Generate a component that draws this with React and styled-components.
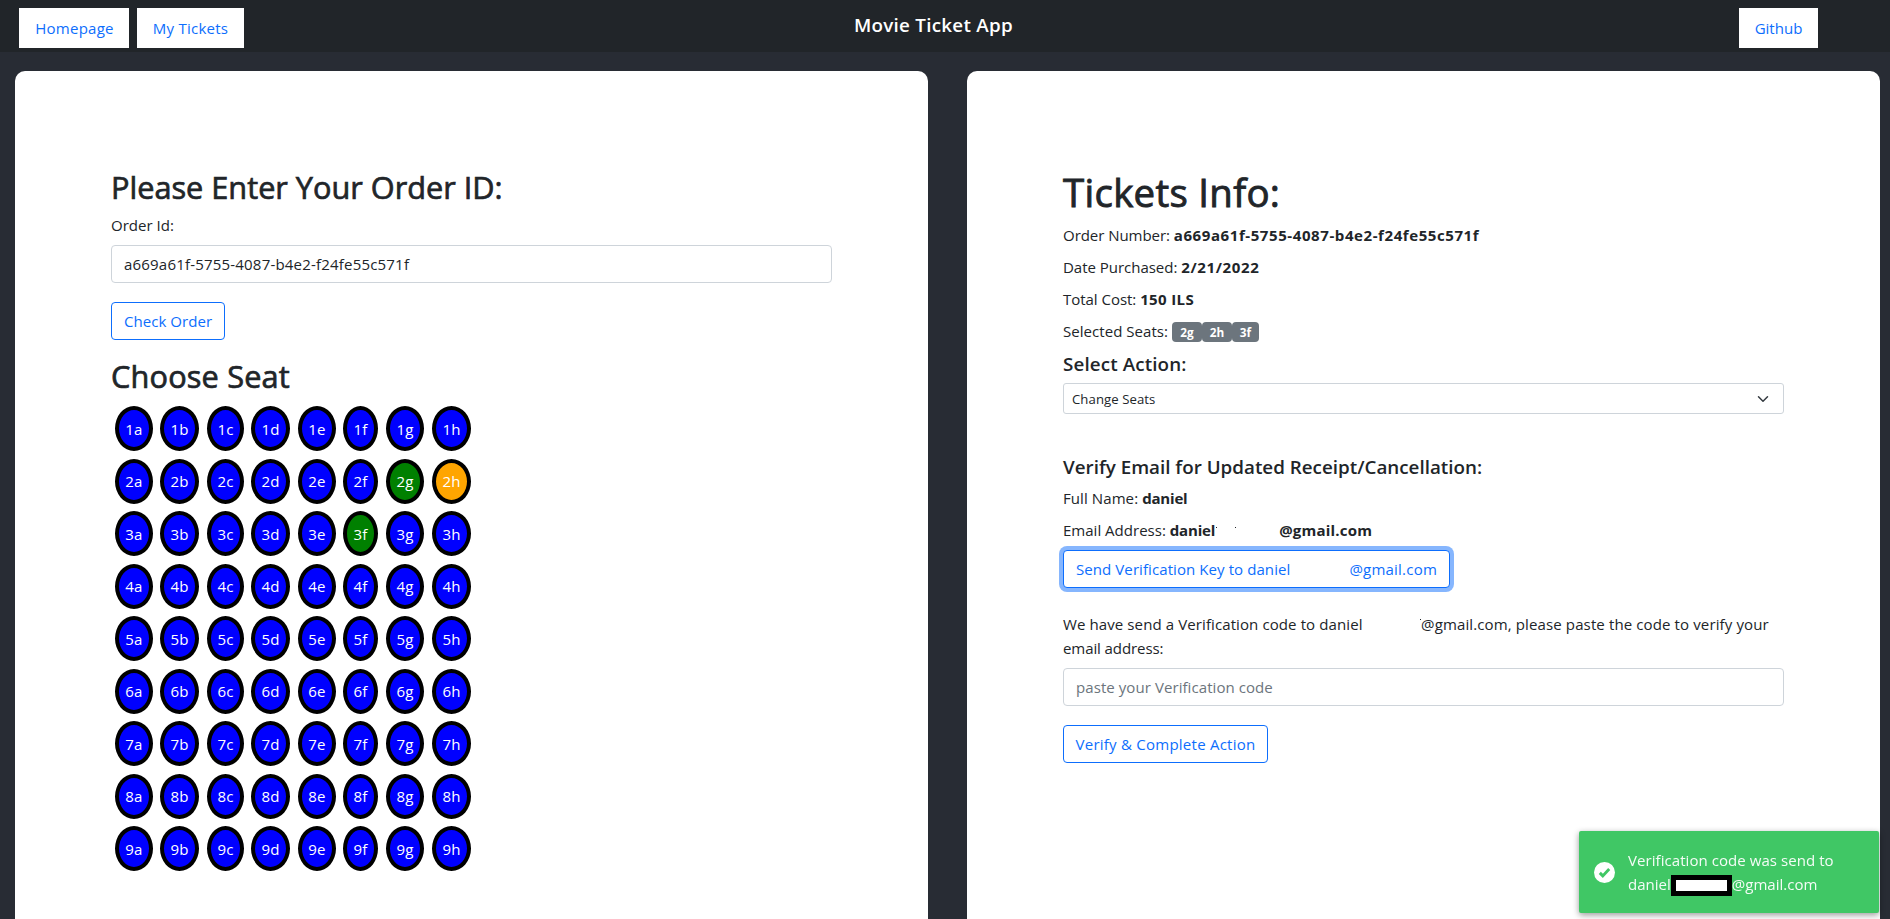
import React from "react";
import styled, { createGlobalStyle } from "styled-components";

const GlobalStyle = createGlobalStyle`
  *, *::before, *::after { box-sizing: border-box; }
  body {
    margin: 0;
    background: #282c34;
    color: #212529;
    font-family: "Open Sans", "Noto Sans", sans-serif;
    font-size: 15.04px;
    line-height: 24px;
    overflow: hidden;
  }
  h1, h2, h5, p { margin: 0 0 8px; }
`;

const Page = styled.div`
  display: flex;
  flex-direction: column;
  height: 100vh;
  min-height: 919px;
`;

const Navbar = styled.nav`
  display: grid;
  grid-template-columns: 835px 1fr auto;
  align-items: start;
  height: 52px;
  padding: 8px 72px 0 19px;
  background: #212529;
`;

const NavGroup = styled.div`
  display: flex;
  gap: 8px;
`;

const NavLink = styled.a`
  width: ${(p) => p.$width}px;
  height: 40px;
  padding: 8px 0 8px ${(p) => p.$indent || 0}px;
  background: #fff;
  color: #0d6efd;
  text-align: center;
  text-decoration: none;
  white-space: nowrap;
  letter-spacing: ${(p) => p.$track || 0}px;
`;

const Columns = styled.main`
  flex: 1;
  display: grid;
  grid-template-columns: 913px 913px;
  gap: 39px;
  padding: 19px 10px 0 15px;
`;

const Card = styled.section`
  padding: 96px 96px 0;
  background: #fff;
  border-radius: 10px 10px 0 0;
`;

const Title = styled.h1`
  padding-top: 3px;
  font-size: 38.4px;
  font-weight: 400;
  line-height: 45px;
  letter-spacing: 0.3px;
  -webkit-text-stroke: 0.9px currentColor;
`;

const Heading = styled.h2`
  padding-top: 3px;
  font-size: 30.7px;
  font-weight: 400;
  line-height: 35.4px;
  letter-spacing: ${(p) => p.$track || 0}px;
  -webkit-text-stroke: 0.7px currentColor;
`;

const Subheading = styled.h5`
  margin-top: ${(p) => p.$space || 0}px;
  padding-top: 2px;
  font-size: 18.8px;
  font-weight: 600;
  line-height: 22px;
  letter-spacing: ${(p) => p.$track || 0}px;
`;

const Brand = styled(Subheading)`
  margin: 4px 0 0;
  color: #fff;
`;

const Label = styled.label`
  display: block;
  margin-bottom: 8px;
`;

const Input = styled.input`
  display: block;
  width: 100%;
  height: 38px;
  margin-bottom: 19px;
  padding: 6px 12px;
  border: 1px solid #ced4da;
  border-radius: 4px;
  background: #fff;
  color: #212529;
  font: inherit;
  letter-spacing: ${(p) => p.$track || 0}px;
  outline: none;
  &::placeholder { color: #6c757d; opacity: 1; }
`;

const Button = styled.button`
  display: flex;
  align-items: center;
  justify-content: center;
  width: ${(p) => p.$width}px;
  height: 38px;
  margin: 0 0 ${(p) => p.$after || 0}px;
  padding: 0;
  border: 1px solid #0d6efd;
  border-radius: 4px;
  background: #fff;
  color: #0d6efd;
  font: inherit;
  white-space: nowrap;
  letter-spacing: ${(p) => p.$track || 0}px;
  box-shadow: ${(p) => (p.$focused ? "0 0 0 4px rgba(13, 110, 253, 0.5)" : "none")};
`;

const SeatGrid = styled.div`
  display: grid;
  grid-template-columns: 45px 47px 44px 47px 45px 43px 46px 39px;
  row-gap: 7.5px;
  padding: 3.6px 0 0 4px;
`;

const seatColors = { free: "blue", mine: "green", picked: "orange" };

const Seat = styled.div`
  display: flex;
  align-items: center;
  justify-content: center;
  width: ${(p) => p.$width}px;
  height: 45px;
  border: 4px solid #000;
  border-radius: 50%;
  background: ${(p) => seatColors[p.$state]};
  color: #fff;
  letter-spacing: 0.2px;
`;

const Info = styled.p`
  white-space: nowrap;
  letter-spacing: ${(p) => p.$track || 0}px;
`;

const Value = styled.b`
  font-weight: 700;
  letter-spacing: ${(p) => p.$track || 0}px;
`;

const Badges = styled.span`
  display: inline-flex;
  vertical-align: top;
  margin-top: 3px;
`;

const Badge = styled.span`
  width: ${(p) => p.$width || 30}px;
  height: 20px;
  border-radius: 4px;
  background: #6c757d;
  color: #fff;
  font-size: 11.8px;
  font-weight: 700;
  line-height: 21px;
  text-align: center;
`;

const Select = styled.div`
  display: flex;
  align-items: center;
  justify-content: space-between;
  height: 31px;
  padding: 0 12px 0 8px;
  border: 1px solid #ced4da;
  border-radius: 3px;
  font-size: 13.16px;
  letter-spacing: 0.07px;
  svg { display: block; }
`;

const Hidden = styled.span`
  position: relative;
  display: inline-block;
  width: ${(p) => p.$width}px;
`;

const Speck = styled.i`
  position: absolute;
  left: ${(p) => p.$x}px;
  bottom: ${(p) => p.$y}px;
  width: 1px;
  height: 1px;
  background: #212529;
`;

const Tracked = styled.span`
  letter-spacing: ${(p) => p.$track || 0}px;
`;

const Toast = styled.aside`
  position: fixed;
  right: 11px;
  bottom: 6px;
  display: flex;
  align-items: center;
  gap: 13px;
  width: 300px;
  height: 82px;
  padding-left: 15px;
  border-radius: 2px;
  background: #40c765;
  color: rgba(255, 255, 255, 0.94);
  box-shadow: 0 2px 6px rgba(0, 0, 0, 0.4);
`;

const ToastLine = styled.div`
  display: flex;
  align-items: flex-end;
  height: 24px;
  white-space: nowrap;
  letter-spacing: ${(p) => p.$track || 0}px;
`;

const Redaction = styled.span`
  width: 61px;
  height: 21px;
  border: 5px solid #000;
  background: #fff;
`;

const rows = [1, 2, 3, 4, 5, 6, 7, 8, 9];
const seatWidths = { a: 38, b: 39, c: 37, d: 39, e: 38, f: 35, g: 38, h: 39 };
const letters = Object.keys(seatWidths);
const states = { "2g": "mine", "3f": "mine", "2h": "picked" };
const orderId = "a669a61f-5755-4087-b4e2-f24fe55c571f";

export default function App() {
  return (
    <Page>
      <GlobalStyle />
      <Navbar>
        <NavGroup>
          <NavLink $width={110} $track={0.25} $indent={1}>Homepage</NavLink>
          <NavLink $width={107} $track={0.23}>My Tickets</NavLink>
        </NavGroup>
        <Brand $track={0.27}>Movie Ticket App</Brand>
        <NavLink $width={79}>Github</NavLink>
      </Navbar>
      <Columns>
        <Card>
          <Heading>Please Enter Your Order ID:</Heading>
          <Label>Order Id:</Label>
          <Input $track={0.18} defaultValue={orderId} />
          <Button $width={114} $after={16} $track={0.04}>Check Order</Button>
          <Heading $track={0.18}>Choose Seat</Heading>
          <SeatGrid>
            {rows.map((row) =>
              letters.map((letter) => (
                <Seat
                  key={row + letter}
                  $width={seatWidths[letter]}
                  $state={states[row + letter] || "free"}
                >
                  {row + letter}
                </Seat>
              ))
            )}
          </SeatGrid>
        </Card>
        <Card>
          <Title>Tickets Info:</Title>
          <Info $track={-0.06}>Order Number: <Value $track={0.57}>{orderId}</Value></Info>
          <Info $track={-0.04}>Date Purchased: <Value $track={0.63}>2/21/2022</Value></Info>
          <Info $track={-0.04}>Total Cost: <Value $track={0.35}>150 ILS</Value></Info>
          <Info $track={0.03}>
            Selected Seats:{" "}
            <Badges>
              <Badge>2g</Badge>
              <Badge>2h</Badge>
              <Badge $width={27}>3f</Badge>
            </Badges>
          </Info>
          <Subheading $track={0.12}>Select Action:</Subheading>
          <Select>
            Change Seats
            <svg width="16" height="12" viewBox="0 0 16 16" fill="none" stroke="#343a40" strokeWidth="2" strokeLinecap="round" strokeLinejoin="round">
              <path d="M2 5l6 6 6-6" />
            </svg>
          </Select>
          <Subheading $space={40} $track={0.01}>Verify Email for Updated Receipt/Cancellation:</Subheading>
          <Info $track={0.07}>Full Name: <Value $track={-0.19}>daniel</Value></Info>
          <Info>
            Email Address: <Value $track={-0.19}>daniel</Value>
            <Hidden $width={64}><Speck $x={1} $y={8} /><Speck $x={20} $y={8} /></Hidden>
            <Value $track={0.19}>@gmail.com</Value>
          </Info>
          <Button $width={387} $after={24} $track={0.07} $focused>
            Send Verification Key to daniel
            <Hidden $width={59} />
            <Tracked $track={0.2}>@gmail.com</Tracked>
          </Button>
          <Info $track={0.09}>
            We have send a Verification code to daniel
            <Hidden $width={58.5}><Speck $x={57} $y={10} /></Hidden>
            <Tracked $track={0.11}>@gmail.com, please paste the code to verify your</Tracked>
            <br />
            <Tracked $track={-0.1}>email address:</Tracked>
          </Info>
          <Input $track={0.06} placeholder="paste your Verification code" />
          <Button $width={205} $track={0.23}>Verify &amp; Complete Action</Button>
        </Card>
      </Columns>
      <Toast>
        <svg width="21" height="21" viewBox="0 0 21 21">
          <circle cx="10.5" cy="10.5" r="10.5" fill="#fff" />
          <path d="M5.8 10.9l3 3 6.4-6.8" fill="none" stroke="#40c765" strokeWidth="2.9" />
        </svg>
        <div>
          <ToastLine $track={0.05}>Verification code was send to</ToastLine>
          <ToastLine>daniel<Redaction />@gmail.com</ToastLine>
        </div>
      </Toast>
    </Page>
  );
}
